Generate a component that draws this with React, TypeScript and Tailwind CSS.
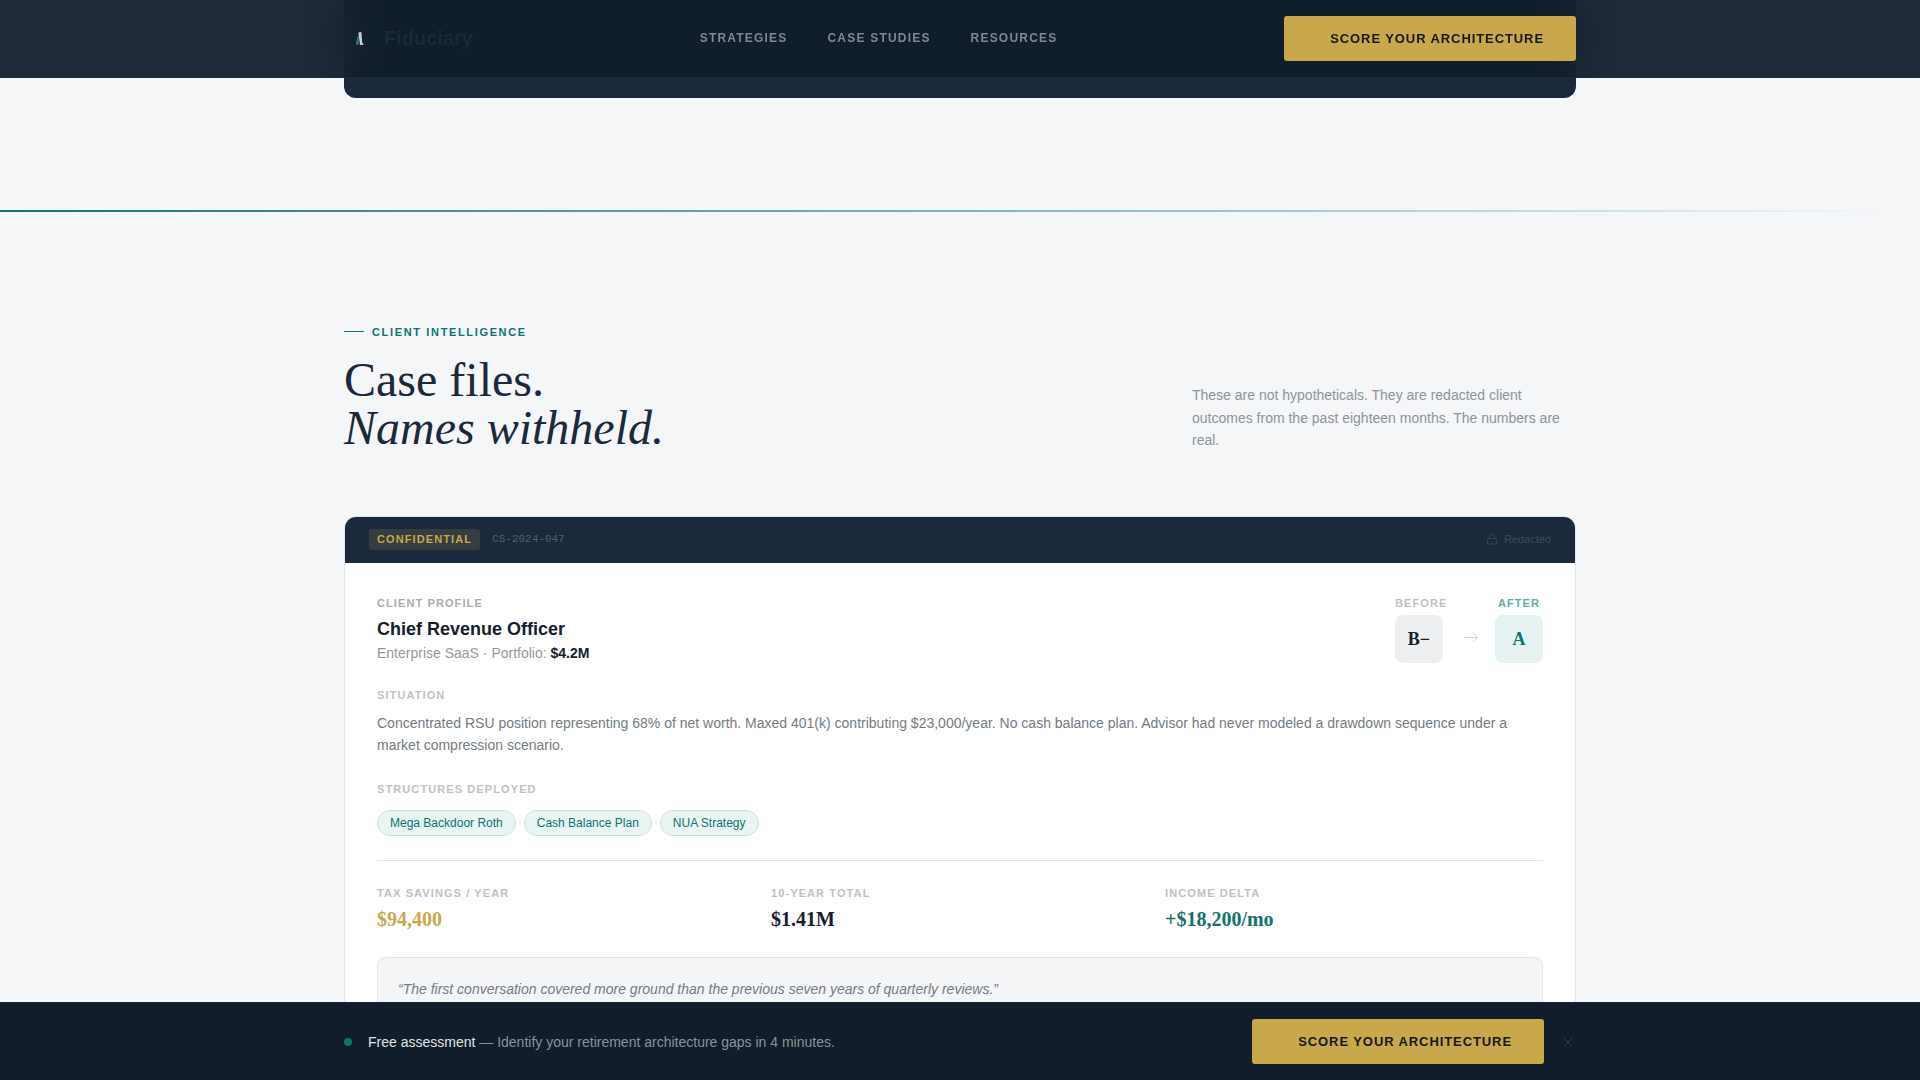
import { Lock, X } from "lucide-react";

const sans = "font-['Liberation_Sans',sans-serif]";
const serif = "font-['Liberation_Serif',serif]";

const links = ["Strategies", "Case Studies", "Resources"];
const structures = ["Mega Backdoor Roth", "Cash Balance Plan", "NUA Strategy"];
const results = [
  { label: "Tax Savings / Year", value: "$94,400", color: "text-[#c8a84b]" },
  { label: "10-Year Total", value: "$1.41M", color: "text-[#15202e]" },
  { label: "Income Delta", value: "+$18,200/mo", color: "text-[#0e7470]" },
];

function ScoreButton() {
  return (
    <button className="h-[45px] rounded-[3px] bg-[#c8a84b] pr-8 pl-[46px] text-[13px] leading-5 font-bold tracking-[0.07em] whitespace-nowrap text-[#15191c] uppercase">
      Score your architecture
    </button>
  );
}

function Logo() {
  return (
    <svg width="32" height="32" viewBox="0 0 32 32" aria-hidden="true">
      <path d="M13.4 14.5 L14.8 13.5 L14.6 22.8 L11.8 22.8 Z" fill="#2f7d80" />
      <path d="M14.4 10.4 L17.4 10 L18.2 20.5 L19.8 22.8 L16 23 Z" fill="#c5d3d8" />
    </svg>
  );
}

function Arrow() {
  return (
    <svg width="20" height="20" viewBox="0 0 20 20" fill="none" stroke="currentColor" aria-hidden="true">
      <path d="M5.5 10.5h13M14 6l4.5 4.5-4.5 4.5" strokeLinecap="round" strokeLinejoin="round" />
    </svg>
  );
}

function Label({ children, className = "text-[#bfc2c5]" }: { children: string; className?: string }) {
  return <h4 className={`text-[11px] leading-4 font-bold tracking-widest uppercase ${className}`}>{children}</h4>;
}

function Grade({ label, grade, tone, box }: { label: string; grade: string; tone: string; box: string }) {
  return (
    <div className="w-12 space-y-1 text-center">
      <Label className={tone}>{label}</Label>
      <div className={`flex size-12 items-center justify-center rounded-lg text-lg font-bold ${serif} ${box}`}>
        {grade}
      </div>
    </div>
  );
}

function CaseFile() {
  return (
    <article className="overflow-hidden rounded-xl border border-[#e4e6e7] bg-white">
      <header className="flex items-center justify-between bg-[#1b293d] px-6 pt-3 pb-[13px]">
        <div className="flex items-center gap-3">
          <span className="rounded-[3px] bg-[#343d3f] px-2 pt-[2px] pb-[3px] text-[11px] leading-4 font-bold tracking-widest text-[#c8a84b] uppercase">
            Confidential
          </span>
          <span className="pb-px font-['Liberation_Mono',monospace] text-[11px] leading-4 text-[#545f6b]">
            CS-2024-047
          </span>
        </div>
        <div className="flex items-center gap-[6px] pb-px text-[11px] leading-4 text-[#3f4a59]">
          <Lock size={12} strokeWidth={1.5} />
          Redacted
        </div>
      </header>

      <div className="p-8">
        <div className="flex items-start justify-between">
          <div>
            <Label className="text-[#a8adb2]">Client Profile</Label>
            <h3 className="mt-1 text-lg leading-7 font-bold text-[#15202e]">Chief Revenue Officer</h3>
            <p className="text-sm leading-5 text-[#93989e]">
              Enterprise SaaS · Portfolio: <strong className="text-[#15202e]">$4.2M</strong>
            </p>
          </div>
          <div className="flex items-center gap-4">
            <Grade label="Before" grade="B−" tone="text-[#bfc2c5]" box="bg-[#eceeef] text-[#15202e]" />
            <div className="pt-4 text-[#cfd2d4]">
              <Arrow />
            </div>
            <Grade label="After" grade="A" tone="text-[#6ba8a6]" box="bg-[#e6f1f1] text-[#0e7470]" />
          </div>
        </div>

        <section className="mt-6">
          <Label>Situation</Label>
          <p className="mt-[9px] text-sm leading-[22px] text-[#747b83]">
            Concentrated RSU position representing 68% of net worth. Maxed 401(k) contributing $23,000/year. No cash
            balance plan. Advisor had never modeled a drawdown sequence under a market compression scenario.
          </p>
        </section>

        <section className="mt-[25px]">
          <Label>Structures Deployed</Label>
          <ul className="mt-[13px] flex flex-wrap gap-2">
            {structures.map((name) => (
              <li
                key={name}
                className="rounded-full border border-[#cbe1e0] bg-[#e9f4f3] px-3 py-1 text-xs leading-4 text-[#0e7470]"
              >
                {name}
              </li>
            ))}
          </ul>
        </section>

        <dl className="mt-6 grid grid-cols-3 gap-4 border-t border-[#e1e4e6] pt-6">
          {results.map((r) => (
            <div key={r.label}>
              <dt className="text-[11px] leading-4 font-bold tracking-widest text-[#bfc2c5] uppercase">{r.label}</dt>
              <dd className={`mt-1 text-xl leading-7 font-bold ${serif} ${r.color}`}>{r.value}</dd>
            </div>
          ))}
        </dl>

        <blockquote className="mt-6 rounded-lg border border-[#e3e6e8] bg-[#f3f5f7] p-5 text-sm leading-[22px] text-[#747b83] italic">
          “The first conversation covered more ground than the previous seven years of quarterly reviews.”
        </blockquote>
      </div>
    </article>
  );
}

export default function App() {
  return (
    <div className={`h-screen overflow-hidden bg-[#f4f6f8] text-[#1b293b] ${sans}`}>
      <nav className="fixed inset-x-0 top-0 z-20 border-b border-[#1e2a38] bg-[#101d2b]/94 py-4 backdrop-blur-xl">
        <div className="mx-auto flex max-w-7xl items-center justify-between px-6">
          <a href="#home" className="flex items-center gap-2 pb-px text-xl leading-7 font-bold text-[#1b2938]">
            <Logo />
            Fiduciary
          </a>
          <div className="flex gap-10 pb-px text-xs font-bold tracking-widest text-[#7f8891] uppercase">
            {links.map((link) => (
              <a key={link} href="#section">
                {link}
              </a>
            ))}
          </div>
          <ScoreButton />
        </div>
      </nav>

      <main>
        <div className="mx-auto max-w-7xl px-6 pb-28">
          <div className="h-[98px] rounded-b-xl bg-[#1b293d]" />
        </div>
        <div className="h-[2px] bg-linear-to-r from-[#0e7470] via-[#9cc8ce] via-65% to-[#9cd0c8]/0 to-98%" />

        <section className="mx-auto max-w-7xl px-6 pt-28 pb-28">
          <div className="flex items-end justify-between">
            <div>
              <p className="flex items-center gap-2 text-[11px] leading-4 font-bold tracking-[0.15em] text-[#0e7470] uppercase">
                <span className="mb-px h-px w-5 bg-[#0e7470]" />
                Client Intelligence
              </p>
              <h2 className={`mt-4 text-5xl leading-none ${serif}`}>
                Case files.
                <br />
                <em>Names withheld.</em>
              </h2>
            </div>
            <p className="w-96 text-sm leading-relaxed text-[#8d949b]">
              These are not hypotheticals. They are redacted client outcomes from the past eighteen months. The numbers
              are real.
            </p>
          </div>
          <div className="mt-16">
            <CaseFile />
          </div>
        </section>
      </main>

      <aside className="fixed inset-x-0 bottom-0 z-20 border-t border-[#152635] bg-[#111d2a] py-4">
        <div className="mx-auto flex max-w-7xl items-center justify-between px-6">
          <p className="flex items-center gap-4 text-sm text-[#8a9299]">
            <span className="size-2 rounded-full bg-[#0e7470]" />
            <span>
              <span className="text-[#e0e4e6]">Free assessment</span> — Identify your retirement architecture gaps in 4
              minutes.
            </span>
          </p>
          <div className="flex items-center gap-4">
            <ScoreButton />
            <button aria-label="Dismiss" className="text-[#323e4a]">
              <X size={16} strokeWidth={1.5} />
            </button>
          </div>
        </div>
      </aside>
    </div>
  );
}
